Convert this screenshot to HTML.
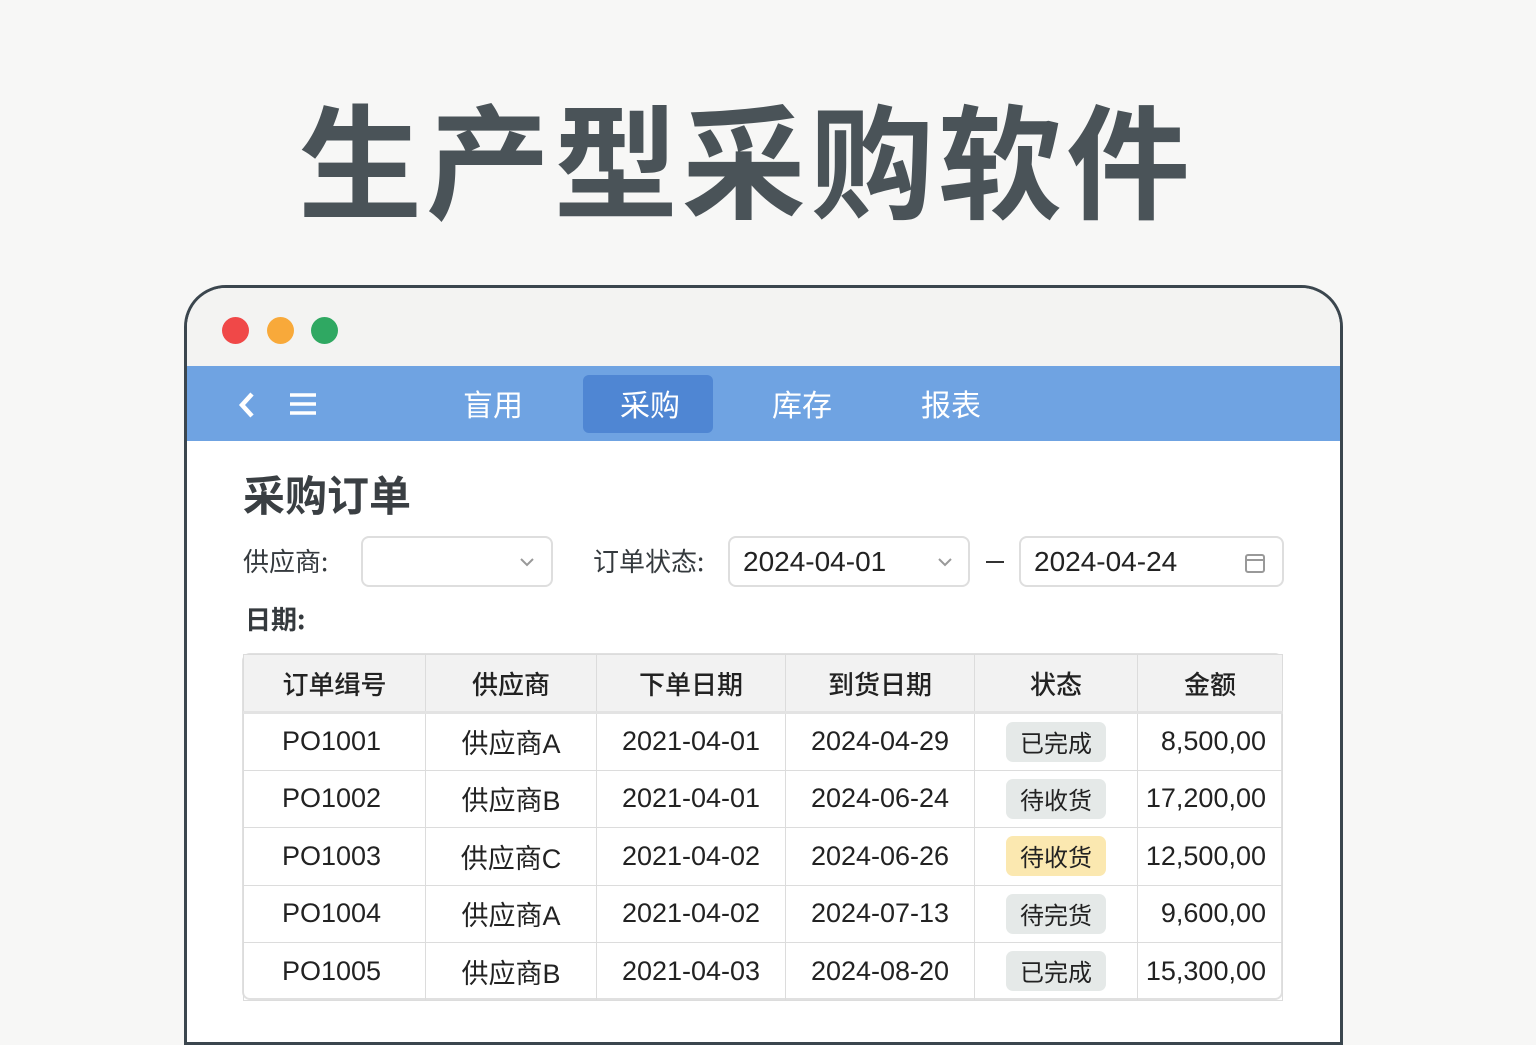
<!DOCTYPE html>
<html><head><meta charset="utf-8"><style>
*{margin:0;padding:0;box-sizing:border-box}
body{width:1536px;height:1024px;background:#f7f7f6;position:relative;overflow:hidden;font-family:"Liberation Sans","Noto Sans CJK SC",sans-serif;color:#2b2f33}
.a{position:absolute}
h1{position:absolute;left:298px;top:80px;width:900px;font-size:124px;font-weight:bold;color:#4a5358;letter-spacing:4px;line-height:150px;white-space:nowrap;font-family:"Noto Sans CJK SC",sans-serif}
.win{left:184px;top:285px;width:1159px;height:760px;border:3px solid #3b464e;border-radius:42px 42px 0 0;background:#fff;overflow:hidden}
.tb{left:0;top:0;width:100%;height:78px;background:#f3f3f2}
.dot{top:29px;width:27px;height:27px;border-radius:50%}
.nav{left:0;top:78px;width:100%;height:75px;background:#6fa3e2}
.tab{top:0;height:75px;line-height:75px;color:#fff;font-size:30px;font-family:"Noto Sans CJK SC",sans-serif}
.act{left:396px;top:9px;width:130px;height:58px;background:#4f86d3;border-radius:6px}
.lbl{font-size:26px;font-family:"Noto Sans CJK SC",sans-serif;color:#353a3e}
.inp{border:2px solid #dedede;border-radius:8px;height:51px;background:#fff;font-size:28px;line-height:47px;padding-left:13px;color:#222}
table{position:absolute;left:243px;top:654px;width:1040px;border-collapse:collapse;font-size:27px}
.tw{left:242px;top:653px;width:1041px;height:347px;border:2px solid #e0e0e0;border-radius:8px;overflow:hidden}
td,th{border:1px solid #dcdcdc;height:57.5px;font-weight:normal;color:#222}
th{background:#f2f2f2;font-family:"Noto Sans CJK SC",sans-serif;font-size:26px;font-weight:500;height:58px;border-bottom:3px solid #e3e3e3}
td{text-align:center}
td.l{text-align:left;padding-left:38px}
td.r{text-align:right;padding-right:16px}
.b{display:inline-block;background:#e5e9e8;border-radius:7px;padding:0 14px;height:40px;line-height:40px;font-size:24px;font-family:"Noto Sans CJK SC",sans-serif}
.y{background:#fbe8b0}
</style></head><body>
<h1>生产型采购软件</h1>
<div class="a win">
 <div class="a tb"></div>
 <div class="a dot" style="left:35px;background:#f04848"></div>
 <div class="a dot" style="left:80px;background:#f8a93a"></div>
 <div class="a dot" style="left:124px;background:#2fa862"></div>
 <div class="a nav">
  <div class="a act"></div>
  <svg class="a" style="left:50px;top:25px" width="20" height="28" viewBox="0 0 20 28"><path d="M15 3 L5 14 L15 25" stroke="#fff" stroke-width="4.5" fill="none"/></svg>
  <svg class="a" style="left:103px;top:26px" width="26" height="24"><path d="M0 3H26M0 12H26M0 21H26" stroke="#fff" stroke-width="3.5"/></svg>
  <div class="a tab" style="left:276px">盲用</div>
  <div class="a tab" style="left:433px">采购</div>
  <div class="a tab" style="left:585px">库存</div>
  <div class="a tab" style="left:734px">报表</div>
 </div>
 <div class="a" style="left:56px;top:175px;font-size:42px;font-weight:bold;font-family:'Noto Sans CJK SC',sans-serif;color:#3a3f43">采购订单</div>
 <div class="a lbl" style="left:56px;top:254px">供应商:</div>
 <div class="a inp" style="left:174px;top:248px;width:192px"></div>
 <svg class="a" style="left:332px;top:269px" width="16" height="10"><path d="M2 2L8 8L14 2" stroke="#999" stroke-width="2" fill="none"/></svg>
 <div class="a lbl" style="left:406px;top:254px">订单状态:</div>
 <div class="a inp" style="left:541px;top:248px;width:242px">2024-04-01</div>
 <svg class="a" style="left:750px;top:269px" width="16" height="10"><path d="M2 2L8 8L14 2" stroke="#999" stroke-width="2" fill="none"/></svg>
 <div class="a" style="left:799px;top:273px;width:18px;height:2px;background:#333"></div>
 <div class="a inp" style="left:832px;top:248px;width:265px">2024-04-24</div>
 <svg class="a" style="left:1057px;top:264px" width="22" height="22"><rect x="2" y="3" width="18" height="17" rx="2" stroke="#999" stroke-width="2" fill="none"/><path d="M2 8H20" stroke="#999" stroke-width="2"/></svg>
 <div class="a lbl" style="left:58px;top:312px;font-weight:bold">日期:</div>
</div>
<div class="a tw"></div>
<table>
<tr><th style="width:182px">订单缉号</th><th style="width:171px">供应商</th><th style="width:189px">下单日期</th><th style="width:189px">到货日期</th><th style="width:163px">状态</th><th>金额</th></tr>
<tr><td class="l">PO1001</td><td>供应商A</td><td>2021-04-01</td><td>2024-04-29</td><td><span class="b">已完成</span></td><td class="r">8,500,00</td></tr>
<tr><td class="l">PO1002</td><td>供应商B</td><td>2021-04-01</td><td>2024-06-24</td><td><span class="b">待收货</span></td><td class="r">17,200,00</td></tr>
<tr><td class="l">PO1003</td><td>供应商C</td><td>2021-04-02</td><td>2024-06-26</td><td><span class="b y">待收货</span></td><td class="r">12,500,00</td></tr>
<tr><td class="l">PO1004</td><td>供应商A</td><td>2021-04-02</td><td>2024-07-13</td><td><span class="b">待完货</span></td><td class="r">9,600,00</td></tr>
<tr><td class="l">PO1005</td><td>供应商B</td><td>2021-04-03</td><td>2024-08-20</td><td><span class="b">已完成</span></td><td class="r">15,300,00</td></tr>
</table>
</body></html>
